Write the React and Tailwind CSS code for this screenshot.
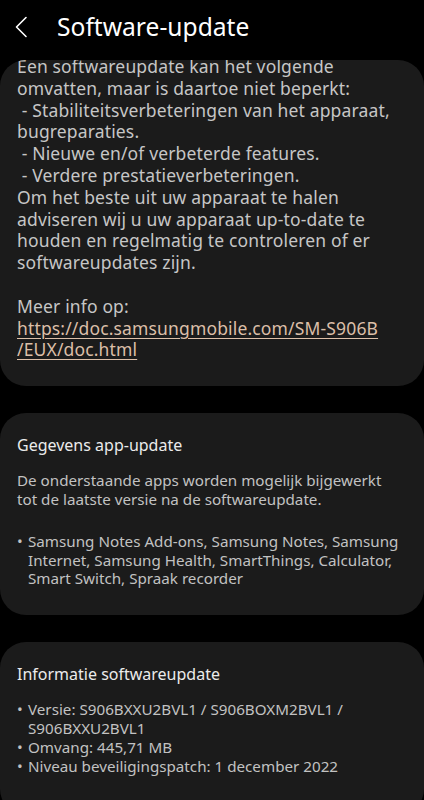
import React from "react";

const font = { fontFamily: "'Noto Sans', Roboto, sans-serif" };

function Bullet({ children }) {
  return (
    <li className="flex">
      <span className="w-[11px] shrink-0">•</span>
      <span>{children}</span>
    </li>
  );
}

export default function App() {
  return (
    <div className="w-[424px] h-[800px] bg-black overflow-hidden" style={font}>
      <header className="h-[60px] flex items-center">
        <svg width="14" height="22" viewBox="0 0 14 22" className="ml-[14px] mt-[-6px]">
          <path d="M12 1.5 L2.5 11 L12 20.5" fill="none" stroke="#ffffff" strokeWidth="1.6" strokeLinecap="round" strokeLinejoin="round" />
        </svg>
        <h1 className="ml-[29px] mt-[-6px] text-[24.6px] text-white">Software-update</h1>
      </header>

      <div className="rounded-t-[26px] overflow-hidden">
        <section className="bg-[#1b1b1b] rounded-b-[26px] px-[17px] pb-[25px] mt-[-4px] text-[17.5px] tracking-[0.15px] leading-[21.8px] text-[#c6c6c6]">
          <p>
            Een softwareupdate kan het volgende
            <br />
            omvatten, maar is daartoe niet beperkt:
          </p>
          <p>&nbsp;- Stabiliteitsverbeteringen van het apparaat,<br />bugreparaties.</p>
          <p>&nbsp;- Nieuwe en/of verbeterde features.</p>
          <p>&nbsp;- Verdere prestatieverbeteringen.</p>
          <p>
            Om het beste uit uw apparaat te halen
            <br />
            adviseren wij u uw apparaat up-to-date te
            <br />
            houden en regelmatig te controleren of er
            <br />
            softwareupdates zijn.
          </p>
          <p>&nbsp;</p>
          <p>Meer info op:</p>
          <p className="text-[#dcbfa8] underline underline-offset-[3px] decoration-[1px]">
            https://doc.samsungmobile.com/SM-S906B
            <br />
            /EUX/doc.html
          </p>
        </section>
      </div>

      <section className="mt-[27px] bg-[#1b1b1b] rounded-[26px] px-[17px] pt-[22px] pb-[27px] text-[15.2px] leading-[18.8px] text-[#c2c2c2]">
        <h2 className="text-[16px] leading-[20px] text-[#ebebeb]">Gegevens app-update</h2>
        <p className="mt-[16px]">
          De onderstaande apps worden mogelijk bijgewerkt
          <br />
          tot de laatste versie na de softwareupdate.
        </p>
        <ul className="mt-[23px]">
          <Bullet>
            Samsung Notes Add-ons, Samsung Notes, Samsung
            <br />
            Internet, Samsung Health, SmartThings, Calculator,
            <br />
            Smart Switch, Spraak recorder
          </Bullet>
        </ul>
      </section>

      <section className="mt-[27px] bg-[#1b1b1b] rounded-[26px] px-[17px] pt-[22px] pb-[40px] text-[15.2px] leading-[18.8px] text-[#c2c2c2]">
        <h2 className="text-[16px] leading-[20px] text-[#ebebeb]">Informatie softwareupdate</h2>
        <ul className="mt-[16px]">
          <Bullet>
            Versie: S906BXXU2BVL1 / S906BOXM2BVL1 /
            <br />
            S906BXXU2BVL1
          </Bullet>
          <Bullet>Omvang: 445,71 MB</Bullet>
          <Bullet>Niveau beveiligingspatch: 1 december 2022</Bullet>
        </ul>
      </section>
    </div>
  );
}
